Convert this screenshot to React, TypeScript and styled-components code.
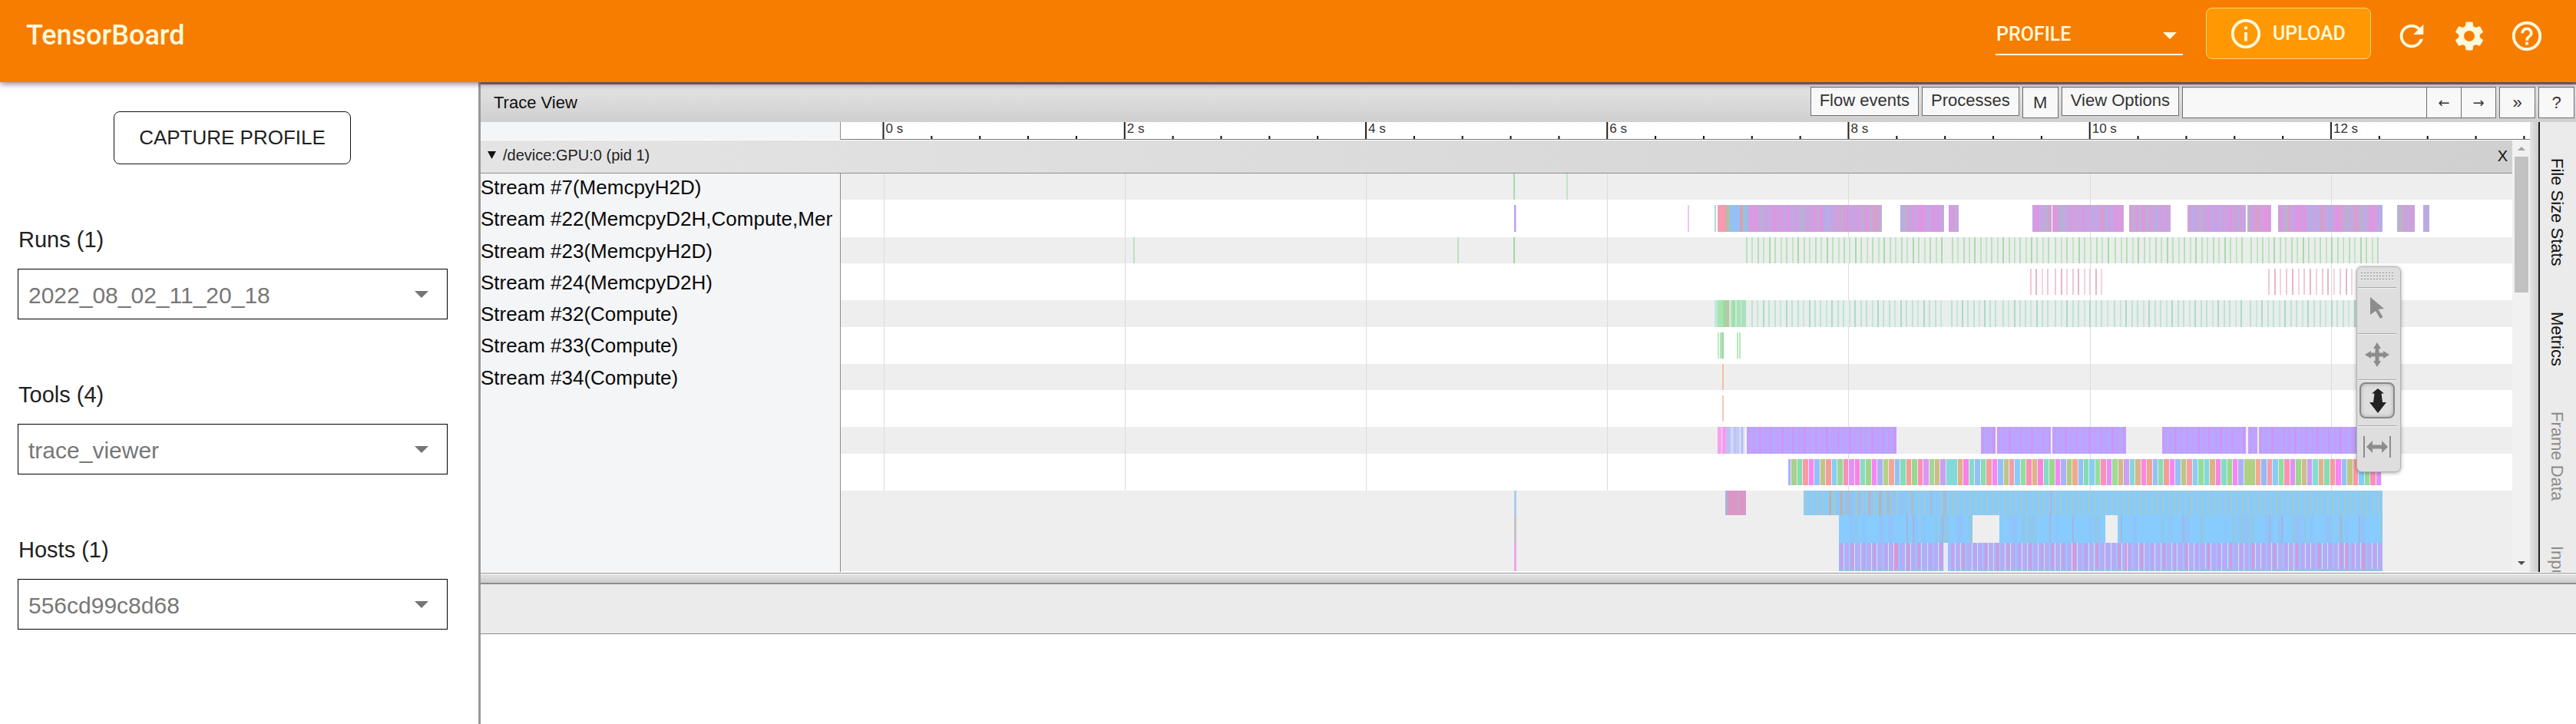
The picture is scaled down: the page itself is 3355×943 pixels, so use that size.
import React from 'react';
import styled, { createGlobalStyle, css } from 'styled-components';
import { MdInfoOutline, MdRefresh, MdSettings, MdHelpOutline } from 'react-icons/md';

const SANS = '"Liberation Sans", Arial, sans-serif';
const CREAM = '#fff9dc';

const GlobalStyle = createGlobalStyle`
  *, *::before, *::after { box-sizing: border-box; }
  body { margin: 0; background: #fff; font-family: ${SANS}; color: #212121; }
  button, input, select { font-family: inherit; color: inherit; }
`;

const Page = styled.div`
  display: flex;
  flex-direction: column;
  min-height: 100vh;
`;

/* ---------- header ---------- */

const Header = styled.header`
  position: relative;
  z-index: 2;
  display: flex;
  align-items: flex-start;
  justify-content: space-between;
  height: 107px;
  padding: 10px 41px 0 34px;
  background: #f77d00;
  color: ${CREAM};
  font-family: Roboto, sans-serif;
  font-weight: 500;
  box-shadow: 0 2px 8px rgba(0, 0, 0, 0.5);
`;

const Brand = styled.h1`
  margin: 14px 0 0;
  font-size: 36px;
  line-height: 44px;
  font-weight: 500;
`;

const HeaderTools = styled.div`
  display: flex;
  align-items: flex-start;
`;

const DashboardPicker = styled.div`
  position: relative;
  width: 244px;
  height: 62px;
  margin-right: 30px;
  border-bottom: 2px solid ${CREAM};
`;

const DashboardSelect = styled.select`
  appearance: none;
  width: 100%;
  height: 100%;
  padding: 9px 0 0;
  border: 0;
  background: transparent;
  font-family: Roboto, sans-serif;
  font-size: 25px;
  font-weight: 500;
  line-height: 30px;
  text-indent: 1px;
`;

const UploadButton = styled.button`
  display: flex;
  align-items: center;
  gap: 12px;
  width: 215px;
  height: 67px;
  margin-right: 30px;
  padding: 0 0 0 28px;
  border: 1px solid #ffd27a;
  border-radius: 8px;
  background: #ff9803;
  font-family: Roboto, sans-serif;
  font-size: 25px;
  font-weight: 500;
`;

const HeaderIcons = styled.div`
  display: flex;
  gap: 29px;
  margin-top: 14px;
`;

const IconButton = styled.button`
  display: flex;
  width: 46px;
  height: 46px;
  padding: 0;
  border: 0;
  background: transparent;
`;

/* ---------- sidebar ---------- */

const Body = styled.div`
  display: flex;
  flex: 1;
`;

const Sidebar = styled.aside`
  display: flex;
  flex-direction: column;
  flex: 0 0 626px;
  padding: 38px 40px 0 23px;
  border-right: 3px solid #999;
`;

const CaptureButton = styled.button`
  width: 309px;
  height: 69px;
  margin: 0 0 0 125px;
  padding: 0;
  border: 1px solid #111;
  border-radius: 8px;
  background: #fff;
  font-size: 26px;
`;

const Fields = styled.div`
  display: flex;
  flex-direction: column;
  gap: 78px;
  margin-top: 78px;
`;

const Field = styled.div`
  display: flex;
  flex-direction: column;
`;

const FieldLabel = styled.label`
  height: 58px;
  padding-left: 1px;
  font-size: 29px;
  line-height: 40px;
`;

const SelectBox = styled.div`
  position: relative;
  height: 66px;
  border: 1px solid #000;
`;

const FieldSelect = styled.select`
  appearance: none;
  width: 100%;
  height: 100%;
  padding: 3px 60px 0 13px;
  border: 0;
  background: transparent;
  color: #777;
  font-size: 30px;
`;

const Caret = styled.svg<{ $top: number; $right: number }>`
  position: absolute;
  top: ${(p) => p.$top}px;
  right: ${(p) => p.$right}px;
  width: 18px;
  height: 9px;
  pointer-events: none;
`;

/* ---------- trace viewer ---------- */

const Main = styled.main`
  position: relative;
  display: flex;
  flex: 1;
  flex-direction: column;
  min-width: 0;
`;

const Toolbar = styled.div`
  display: flex;
  align-items: flex-start;
  justify-content: space-between;
  height: 52px;
  padding: 3px 2px 0 17px;
  border-top: 3px solid #8a7a6c;
  background: linear-gradient(#e4e4e4, #cfcfcf);
`;

const ToolbarTitle = styled.h2`
  margin: 7px 0 0;
  color: #111;
  font-size: 22px;
  font-weight: 400;
  line-height: 28px;
`;

const ToolbarControls = styled.div`
  display: flex;
  gap: 4px;
`;

const boxed = css`
  border: 1px solid #6f6f6f;
  border-radius: 0;
  background: #f8f8f8;
  color: #333;
  font-size: 22px;
`;

const ToolbarButton = styled.button`
  ${boxed}
  height: 38px;
  padding: 0 11px 2px;
`;

const SquareButton = styled.button<{ $arrow?: boolean }>`
  ${boxed}
  width: 47px;
  height: 41px;
  padding: 0;
  ${(p) => p.$arrow && css`
    width: 46px;
    margin-left: -1px;
    font-family: 'DejaVu Sans', sans-serif;
    font-size: 18px;
  `}
`;

const FindGroup = styled.div`
  display: flex;
`;

const FindInput = styled.input`
  ${boxed}
  width: 319px;
  height: 41px;
  padding: 0 8px;
`;

const TraceArea = styled.div`
  display: flex;
  height: 586px;
`;

const TraceColumn = styled.div`
  flex: 1;
  min-width: 0;
  display: flex;
  flex-direction: column;
`;

const RulerRow = styled.div`
  display: flex;
  height: 24px;
`;

const RulerGutter = styled.div`
  flex: 0 0 469px;
  height: 23px;
  background: #f4f5f7;
  border-right: 1px solid #8e8e8e;
`;

const RulerScale = styled.svg`
  flex: 1;
  min-width: 0;
  height: 23px;
  border-bottom: 1px solid #777;
  font-size: 17px;
  fill: #333;
`;

const Scroller = styled.div`
  display: flex;
  flex: 1;
`;

const Process = styled.section`
  flex: 1;
  min-width: 0;
`;

const ProcessHeader = styled.div`
  display: flex;
  align-items: center;
  justify-content: space-between;
  height: 43px;
  padding: 0 6px 4px 9px;
  border-bottom: 1px solid #8e8e8e;
  background: linear-gradient(to right, #e4e4e4, #d0d0d0);
`;

const ProcessToggle = styled.button`
  display: flex;
  align-items: center;
  gap: 9px;
  padding: 0;
  border: 0;
  background: transparent;
  color: #222;
  font-size: 20px;
  line-height: 24px;
`;

const CloseButton = styled.button`
  padding: 2px 0 0;
  border: 0;
  background: transparent;
  color: #111;
  font-size: 20px;
  line-height: 24px;
`;

const Tracks = styled.div`
  display: flex;
  height: 519px;
`;

const Labels = styled.div`
  flex: 0 0 469px;
  padding-right: 10px;
  background: #f4f5f7;
  border-right: 1px solid #8e8e8e;
`;

const LabelList = styled.ul`
  display: grid;
  grid-auto-rows: 1fr;
  height: 289px;
  margin: 0;
  padding: 0;
  list-style: none;
`;

const Label = styled.li`
  overflow: hidden;
  color: #0a0a0a;
  font-size: 26px;
  line-height: 36px;
  white-space: nowrap;
`;

const Chart = styled.svg`
  flex: 1;
  min-width: 0;
  height: 518px;
`;

const Scrollbar = styled.div`
  display: flex;
  flex-direction: column;
  align-items: center;
  width: 23px;
  padding: 8px 0 9px;
  background: #f1f1f1;
`;

const ScrollThumb = styled.div`
  width: 18px;
  height: 177px;
  margin: 8px 0 auto;
  background: #c1c1c1;
`;

const Divider = styled.div`
  width: 13px;
  border-right: 2px solid #1c1c1c;
  background: linear-gradient(to right, #e4e4e4, #cbcbcb);
`;

const SideTabs = styled.nav`
  display: flex;
  gap: 59px;
  width: 47px;
  padding: 47px 10px 0 0;
  overflow: hidden;
  background: #ebebeb;
  writing-mode: vertical-rl;
`;

const SideTab = styled.a<{ $muted?: boolean }>`
  color: ${(p) => (p.$muted ? '#8b8b8b' : '#111')};
  font-size: 22px;
  line-height: 30px;
  text-decoration: none;
  white-space: nowrap;
`;

const DragBar = styled.div`
  height: 15px;
  margin-top: 1px;
  border-top: 1px solid #8c8c8c;
  border-bottom: 2px solid #8c8c8c;
  background: linear-gradient(#fff 0 1px, #e3e3e3 1px, #cdcdcd);
`;

const AnalysisTabs = styled.div`
  height: 65px;
  border-bottom: 1px solid #8e8e8e;
  background: #ebebeb;
`;

/* ---------- floating mouse mode palette ---------- */

const Palette = styled.div`
  position: absolute;
  top: 240px;
  right: 228px;
  display: flex;
  flex-direction: column;
  width: 58px;
  height: 268px;
  padding: 6px 5px 0 1px;
  border: 1px solid #b4b4b4;
  border-radius: 7px;
  background: #dedede;
  box-shadow: 0 1px 5px rgba(0, 0, 0, 0.35);
`;

const Grip = styled.svg`
  width: 46px;
  height: 20px;
  margin-left: 3px;
`;

const PaletteSlot = styled.div`
  display: flex;
  justify-content: center;
  height: 60px;
  padding-top: 3px;
  border-top: 1px solid #a8a8a8;
  box-shadow: inset 0 1px 0 #f2f2f2;
`;

const ModeButton = styled.button<{ $active?: boolean }>`
  display: flex;
  align-items: center;
  justify-content: center;
  width: 46px;
  height: 47px;
  padding: 0;
  border: 2px solid ${(p) => (p.$active ? '#888' : 'transparent')};
  border-radius: 8px;
  background: transparent;
  box-shadow: ${(p) => (p.$active ? 'inset 0 0 5px rgba(0, 0, 0, 0.25)' : 'none')};
`;

/* ---------- trace data ---------- */

type Slice = { x: number; y: number; w: number; h: number; c: string };

const VIEW_X = 1095;
const VIEW_Y = 226;
const VIEW_W = 2177;
const VIEW_H = 518;
const MAJORS = [0, 2, 4, 6, 8, 10, 12];
const majorX = (s: number) => 1150.5 + s * 157.12;

function makeRandom(seed: number) {
  let state = seed;
  return () => {
    state = (state * 1664525 + 1013904223) % 4294967296;
    return state / 4294967296;
  };
}

const slices: Slice[] = [];
const add = (x: number, end: number, y: number, h: number, c: string) =>
  slices.push({ x, y, w: end - x, h, c });

function noise(x: number, end: number, y: number, h: number, colors: string[], seed: number, min = 2, spread = 4) {
  const rnd = makeRandom(seed);
  let at = x;
  while (at < end) {
    const next = Math.min(end, at + min + Math.floor(rnd() * spread));
    add(at, next, y, h, colors[Math.floor(rnd() * colors.length)]);
    at = next;
  }
}

function comb(x: number, end: number, pitch: number, y: number, h: number, colors: string[], width = 2) {
  const n = Math.round((end - x) / pitch);
  for (let i = 0; i <= n; i += 1) {
    const at = Math.round(x + ((end - x) * i) / n);
    add(at, at + width, y, h, colors[i % colors.length]);
  }
}

const GREEN = '#a3dcae';

/* Stream #7 */
add(1971, 1973, 226, 34, GREEN);
add(2040, 2042, 226, 34, '#c2e4c6');

/* Stream #22 */
add(1972, 1974, 267, 35, '#b3a4f8');
add(1974, 1975, 267, 35, '#ecc4f8');
add(2198, 2200, 267, 35, '#f3c6f0');
add(2233, 2235, 267, 35, '#a6dcda');
const MEMCPY = ['#e094e4', '#dc98e2', '#d29fdd', '#c3a6e4', '#b8abe6', '#cba2e0', '#d69fcc', '#b8b2d0', '#c8a4e2'];
[[2276, 2451], [2475, 2532], [2538, 2551], [2647, 2672], [2673, 2766], [2773, 2827], [2849, 2925], [2927, 2958], [2967, 3103], [3122, 3145], [3156, 3164]]
  .forEach(([a, b], i) => noise(a, b, 267, 35, MEMCPY, 41 + i * 17));
add(2237, 2247, 267, 35, '#f79cb0');
add(2247, 2249, 267, 35, '#d8a8a4');
add(2249, 2253, 267, 35, '#a9c4a8');
add(2253, 2266, 267, 35, '#94c0f6');
add(2266, 2270, 267, 35, '#dd9fae');
add(2270, 2276, 267, 35, '#90c4e0');

/* Stream #23 */
add(2274, 3097, 309, 34, '#e9eeea');
add(1476, 1478, 309, 34, '#b9e2be');
add(1898, 1900, 309, 34, '#b9e2be');
add(1971, 1973, 309, 34, '#98dca4');
const COPY = ['#bce0bd', '#c4e3c5', '#b8deb9', '#c4e3c5', '#a9d9ad'];
[[2274, 2528], [2542, 2667], [2676, 2745], [2754, 2919], [2931, 3096]]
  .forEach(([a, b]) => comb(a, b, 7.4, 309, 34, COPY));

/* Stream #24 */
const PINKS = ['#f2c6d8', '#e9b4c8', '#f6d2e0'];
[[2644, 2666], [2676, 2736], [2954, 3070]].forEach(([a, b]) => comb(a, b, 7.6, 350, 34, PINKS));

/* Stream #32 */
add(2274, 3097, 391, 35, '#e7eeeb');
add(2233, 2237, 391, 35, '#bfe6df');
noise(2237, 2247, 391, 35, ['#96dca0', '#a6e4ae'], 7, 2, 3);
add(2247, 2252, 391, 35, '#b6c8a8');
add(2252, 2274, 391, 35, '#cdebd6');
add(2255, 2260, 391, 35, '#a2dfac');
add(2262, 2267, 391, 35, '#a6e2ba');
add(2268, 2274, 391, 35, '#abe0be');
const KERNELS = ['#bfe2d4', '#c8e6da', '#acdac6', '#bfe2d4'];
[[2281, 2527], [2541, 2598], [2608, 2666], [2676, 2744], [2753, 2918], [2930, 3096]]
  .forEach(([a, b]) => comb(a, b, 7.4, 391, 35, KERNELS));

/* Stream #33 */
add(2237, 2239, 433, 34, '#bfe8c6');
add(2240, 2245, 433, 34, '#b2e4b6');
add(2243, 2245, 433, 34, '#98d8a4');
add(2262, 2264, 433, 34, '#b9e6c2');
add(2265, 2267, 433, 34, '#b9e6c2');

/* Stream #34 and the one below it */
add(2243, 2245, 474, 34, '#f0bfaa');
add(2243, 2245, 515, 34, '#efcbb9');

/* Name scope */
noise(2237, 2248, 556, 35, ['#f794ec', '#f9b6f0', '#f5a0ee'], 5, 2, 2);
noise(2248, 2272, 556, 35, ['#bcc2f6', '#d3daf8', '#b0b8f0', '#c4caf8'], 9, 2, 3);
[[2275, 2470], [2580, 2599], [2601, 2671], [2673, 2769], [2816, 2925], [2928, 2940], [2942, 3103]].forEach(([a, b]) => {
  add(a, b, 556, 35, '#b5a9fd');
  comb(a + 1, b - 4, 7.3, 556, 35, ['#cd97fa', '#c79cfa', '#d491f8', '#c89cfa'], 3);
});

/* TensorFlow ops */
const OPS = (
  'aab0f8 a8d08c 88dcac f89ca4 f884f8 94c0f8 c0c484 f49c9c 88ccf8 98d898 f890b8 e490f8 f884e4 88dcc0 a0d490 f884f8 ' +
  'acb0f8 b4d084 f0a894 94c0f8 84dcb8 f4a094 98d890 fc90b4 e094f8 a0d894 d0bc84 c8a0f4 84d8d8 84d8d8 e0b088 f884e8 ' +
  '84dcc8 94c0f8 88dcb0 f49ca0 f884f8 94c0f8 c0c484 f49cac 88ccf8 94dc9c f890b4 e4b088 f884e0 84dcc8 9cd88c f884fc ' +
  'acb0f8 b0cc84 f0a890 94c0f8 84dcb4 88ccf8 98dc9c f890b8 e490f8 9cdc94 d4b888 cca0f4 84d8d8 dcb48c fc88e0 f0a494 ' +
  '94c0f8 88dcb0 f49c9c f884f8 94c0f8 c0c484 f4a0a8 88ccf8 94dc9c 84d8d8 e0b088 f884e4 84dcc8 9cd88c f884fc acb0f8 ' +
  'b0d084 b0d084 f4a894 94b8f8 f0a0b0 88ccf8 90dc9c fc90b8 e090f8 9cd88c d0bc88 cca0f4 84dcd8 dcb488 88dcb0 fc98a0 ' +
  'f884f8 94c0f8 c0c484 fc98a0 84ccfc 94dc9c fc90b8 e490f8'
).split(' ');
add(2329, 3102, 598, 34, '#e4ece8');
OPS.forEach((c, i) => {
  const a = Math.round(2326 + (776 * i) / OPS.length);
  const b = Math.round(2326 + (776 * (i + 1)) / OPS.length);
  const joined = OPS[i + 1] === c;
  add(Math.max(a, 2329), joined ? b : b - 1, 598, 34, `#${c}`);
});

/* Host threads */
noise(2249, 2274, 639, 32, ['#bca6cc', '#e094c4', '#cf9fcb', '#d698c6'], 3, 2, 2);
add(2247, 2249, 639, 32, '#a0b8dc');
add(2349, 3103, 639, 32, '#88cbfb');
comb(2351, 3097, 7.4, 639, 32, ['#a3c9cc', '#9dcad6', '#a8c8c4'], 2);
noise(2351, 2540, 639, 32, ['#88cbfb00', '#88cbfb00', '#88cbfb00', '#a6b8d4aa', '#90c4f4'], 77, 2, 5);
add(2382, 2385, 639, 32, '#bcb0a8');
add(2397, 2399, 639, 32, '#bcb0a8');
add(2433, 2435, 639, 32, '#b8b0c0');
add(2447, 2450, 639, 32, '#b8b4a8');
add(2670, 2672, 639, 32, '#b4b0d8');

const CALLS: [number, number][] = [[2395, 2569], [2604, 2742], [2758, 3103]];
CALLS.forEach(([a, b], i) => {
  add(a, b, 671, 36, '#87ccfd');
  noise(a, b, 671, 36, ['#87ccfd', '#87ccfd', '#87ccfd', '#8cc6fb', '#90c3fb', '#87ccfd', '#8fc8e8'], 120 + i, 2, 6);
});
[2483, 2491, 2529, 2669, 2699, 2762, 2843, 2955, 2971, 3048, 3072].forEach((x) => add(x, x + 2, 671, 36, '#a4b4dc'));

add(2395, 3103, 707, 37, '#a2b6fb');
comb(2397, 3099, 7.25, 707, 34, ['#c79fee', '#c2a6f2', '#d498dc', '#bfa8f4'], 3);
comb(2401, 3096, 7.25, 707, 37, ['#d8dcfa', '#a6c8fa', '#e2dcf6'], 1);
comb(2396, 3096, 7.25, 741, 3, ['#8cc8d8'], 4);
add(2532, 2537, 707, 37, '#e6edf2');
[2467, 2484, 2601, 2700, 2768, 3055, 3078].forEach((x) => add(x, x + 2, 707, 37, '#e292cc'));

add(1972, 1975, 639, 34, '#a9cdec');
add(1972, 1975, 673, 34, '#c8bfc8');
add(1972, 1975, 707, 37, '#eaa8e6');

/* ---------- drawings ---------- */

const ARROW = '#8c8c8c';

const SelectionIcon = () => (
  <svg width="22" height="32" viewBox="0 0 22 32" aria-hidden="true">
    <path d="M2 1 L20 16 L12.500 17 L18.500 27 L15 29 L9 19 L2 24 Z" fill={ARROW} />
  </svg>
);

const PanIcon = () => (
  <svg width="34" height="34" viewBox="0 0 34 34" aria-hidden="true">
    <path
      d="M17 1 L22 9 H19.500 V14.500 H25 V12 L33 17 L25 22 V19.500 H19.500 V25 H22 L17 33 L12 25 H14.500 V19.500 H9 V22 L1 17 L9 12 V14.500 H14.500 V9 H12 Z"
      fill={ARROW}
    />
  </svg>
);

const ZoomIcon = () => (
  <svg width="26" height="36" viewBox="0 0 26 36" aria-hidden="true">
    <path d="M14 2 L22 8.500 H18.500 L20 20 H25 L14 34 L3 20 H8 L9.500 8.500 H6 Z" fill="#222" />
  </svg>
);

const TimingIcon = () => (
  <svg width="36" height="30" viewBox="0 0 36 30" aria-hidden="true">
    <path d="M0 1h2v28H0zM34 1h2v28h-2z" fill={ARROW} />
    <path d="M4 15 L12 7 V12.500 H24 V7 L32 15 L24 23 V17.500 H12 V23 Z" fill={ARROW} />
  </svg>
);

const streams = [
  'Stream #7(MemcpyH2D)',
  'Stream #22(MemcpyD2H,Compute,MemcpyH2D)',
  'Stream #23(MemcpyH2D)',
  'Stream #24(MemcpyD2H)',
  'Stream #32(Compute)',
  'Stream #33(Compute)',
  'Stream #34(Compute)',
];

const bands = [[226, 34], [309, 34], [391, 35], [474, 34], [556, 35], [639, 105]];

const fields = [
  { id: 'runs', label: 'Runs (1)', value: '2022_08_02_11_20_18' },
  { id: 'tools', label: 'Tools (4)', value: 'trace_viewer' },
  { id: 'hosts', label: 'Hosts (1)', value: '556cd99c8d68' },
];

const Ruler = () => {
  const pct = (x: number) => `${((x - VIEW_X) / 2200) * 100}%`;
  const minors = Array.from({ length: 35 }, (_, i) => i).filter((i) => i % 5 !== 0);
  return (
    <RulerScale>
      {minors.map((i) => (
        <rect key={i} x={pct(1149.5 + i * 62.85)} y="18" width="2" height="4" fill="#111" />
      ))}
      {MAJORS.map((s) => (
        <g key={s}>
          <rect x={pct(majorX(s) - 1)} y="0" width="2" height="22" fill="#222" />
          <text x={pct(majorX(s) + 3)} y="14">{s} s</text>
        </g>
      ))}
    </RulerScale>
  );
};

const TraceChart = () => (
  <Chart
    viewBox={`${VIEW_X} ${VIEW_Y} ${VIEW_W} ${VIEW_H}`}
    preserveAspectRatio="none"
    shapeRendering="crispEdges"
    role="img"
    aria-label="Trace events"
  >
    {bands.map(([y, h]) => (
      <rect key={y} x={VIEW_X} y={y} width={VIEW_W} height={h} fill="#eee" />
    ))}
    {MAJORS.map((s) => (
      <rect key={s} x={Math.round(majorX(s))} y={VIEW_Y} width="1" height="413" fill="#dcdcdc" />
    ))}
    {slices.map((s, i) => (
      <rect key={i} x={s.x} y={s.y} width={s.w} height={s.h} fill={s.c} />
    ))}
  </Chart>
);

export default function App() {
  return (
    <Page>
      <GlobalStyle />
      <Header>
        <Brand>TensorBoard</Brand>
        <HeaderTools>
          <DashboardPicker>
            <DashboardSelect aria-label="Dashboard">
              <option>PROFILE</option>
            </DashboardSelect>
            <Caret $top={32} $right={8} viewBox="0 0 18 9" aria-hidden="true">
              <path d="M0 0h18l-9 9z" fill={CREAM} />
            </Caret>
          </DashboardPicker>
          <UploadButton>
            <MdInfoOutline size={46} />
            UPLOAD
          </UploadButton>
          <HeaderIcons>
            <IconButton aria-label="Reload"><MdRefresh size={46} /></IconButton>
            <IconButton aria-label="Settings"><MdSettings size={46} /></IconButton>
            <IconButton aria-label="Help"><MdHelpOutline size={46} /></IconButton>
          </HeaderIcons>
        </HeaderTools>
      </Header>

      <Body>
        <Sidebar>
          <CaptureButton>CAPTURE PROFILE</CaptureButton>
          <Fields>
            {fields.map((f) => (
              <Field key={f.id}>
                <FieldLabel htmlFor={f.id}>{f.label}</FieldLabel>
                <SelectBox>
                  <FieldSelect id={f.id}>
                    <option>{f.value}</option>
                  </FieldSelect>
                  <Caret $top={28} $right={24} viewBox="0 0 18 9" aria-hidden="true">
                    <path d="M0 0h18l-9 9z" fill="#757575" />
                  </Caret>
                </SelectBox>
              </Field>
            ))}
          </Fields>
        </Sidebar>

        <Main>
          <Toolbar>
            <ToolbarTitle>Trace View</ToolbarTitle>
            <ToolbarControls>
              <ToolbarButton>Flow events</ToolbarButton>
              <ToolbarButton>Processes</ToolbarButton>
              <SquareButton>M</SquareButton>
              <ToolbarButton>View Options</ToolbarButton>
              <FindGroup>
                <FindInput type="text" aria-label="Find" />
                <SquareButton $arrow aria-label="Previous">←</SquareButton>
                <SquareButton $arrow aria-label="Next">→</SquareButton>
              </FindGroup>
              <SquareButton>»</SquareButton>
              <SquareButton>?</SquareButton>
            </ToolbarControls>
          </Toolbar>

          <TraceArea>
            <TraceColumn>
              <RulerRow>
                <RulerGutter />
                <Ruler />
              </RulerRow>
              <Scroller>
                <Process>
                  <ProcessHeader>
                    <ProcessToggle>
                      <svg width="11" height="10" viewBox="0 0 11 10" aria-hidden="true">
                        <path d="M0 0h11L5.500 10z" fill="#111" />
                      </svg>
                      /device:GPU:0 (pid 1)
                    </ProcessToggle>
                    <CloseButton>X</CloseButton>
                  </ProcessHeader>
                  <Tracks>
                    <Labels>
                      <LabelList>
                        {streams.map((s) => <Label key={s}>{s}</Label>)}
                      </LabelList>
                    </Labels>
                    <TraceChart />
                  </Tracks>
                </Process>
                <Scrollbar>
                  <svg width="10" height="5" viewBox="0 0 10 5" aria-hidden="true">
                    <path d="M5 0l5 5H0z" fill="#a3a3a3" />
                  </svg>
                  <ScrollThumb />
                  <svg width="10" height="5" viewBox="0 0 10 5" aria-hidden="true">
                    <path d="M0 0h10L5 5z" fill="#505050" />
                  </svg>
                </Scrollbar>
              </Scroller>
            </TraceColumn>
            <Divider />
            <SideTabs aria-label="Side panels">
              <SideTab href="#file-size">File Size Stats</SideTab>
              <SideTab href="#metrics">Metrics</SideTab>
              <SideTab href="#frame" $muted>Frame Data</SideTab>
              <SideTab href="#latency" $muted>Input Latency</SideTab>
            </SideTabs>
          </TraceArea>

          <DragBar />
          <AnalysisTabs />

          <Palette>
            <Grip viewBox="0 0 46 20" aria-hidden="true">
              {[1, 5, 9].map((y) => (
                <g key={y}>
                  <path d={`M1 ${y}.500H45`} stroke="#888" strokeWidth="1" strokeDasharray="2 2" />
                  <path d={`M1 ${y + 1}.500H45`} stroke="#f4f4f4" strokeWidth="1" strokeDasharray="2 2" />
                </g>
              ))}
            </Grip>
            <PaletteSlot><ModeButton aria-label="Selection"><SelectionIcon /></ModeButton></PaletteSlot>
            <PaletteSlot><ModeButton aria-label="Pan"><PanIcon /></ModeButton></PaletteSlot>
            <PaletteSlot><ModeButton $active aria-label="Zoom"><ZoomIcon /></ModeButton></PaletteSlot>
            <PaletteSlot><ModeButton aria-label="Timing"><TimingIcon /></ModeButton></PaletteSlot>
          </Palette>
        </Main>
      </Body>
    </Page>
  );
}
